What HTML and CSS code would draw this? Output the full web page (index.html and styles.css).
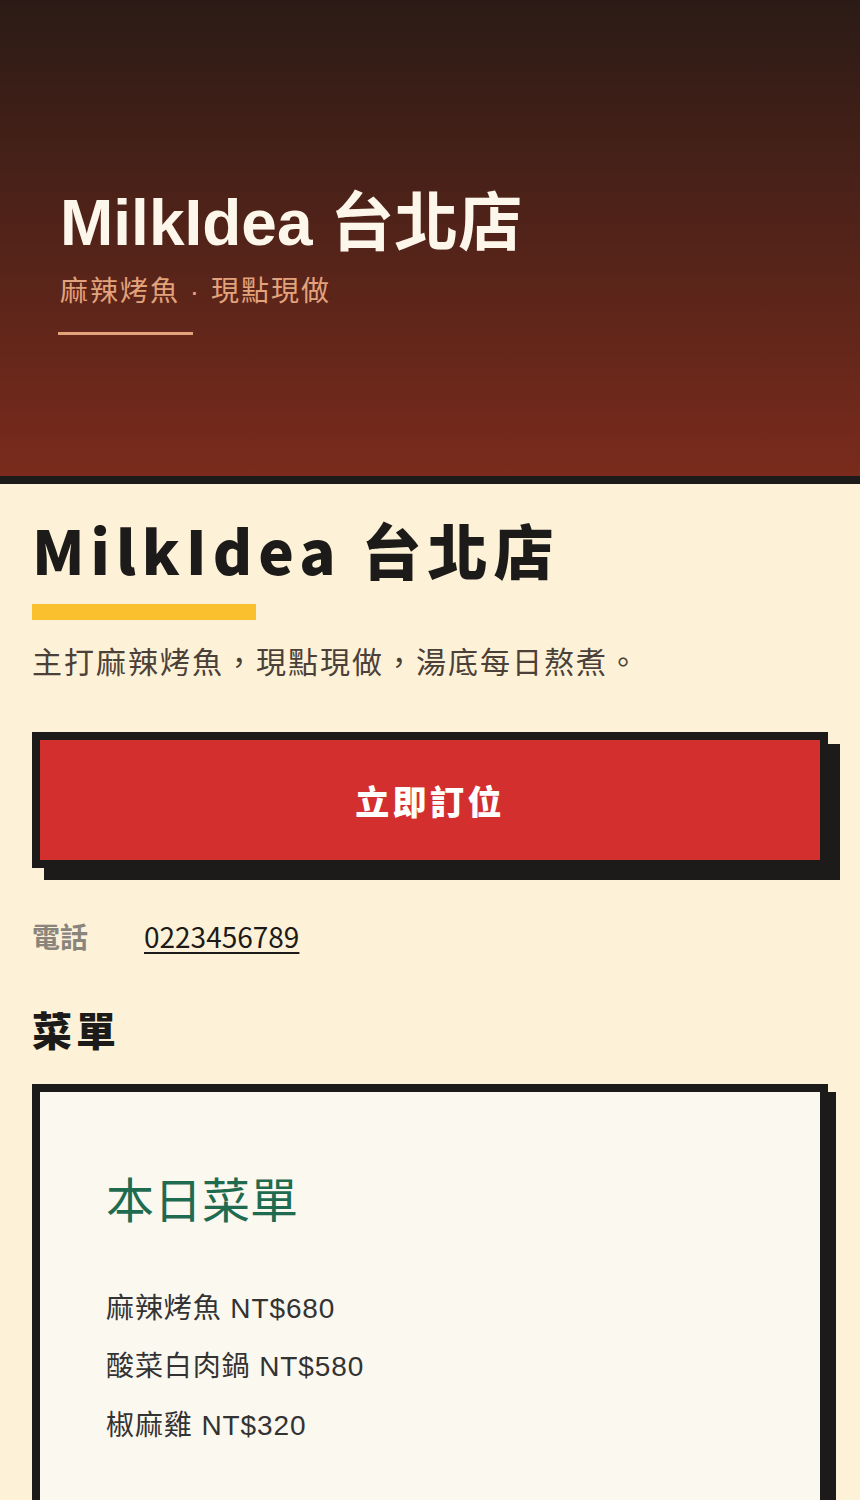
FILE: index.html
```html
<!DOCTYPE html>
<html lang="zh-Hant">
<head>
  <meta charset="UTF-8" />
  <meta name="viewport" content="width=device-width, initial-scale=1.0"/>
  <title>MilkIdea 台北店</title>
  <link rel="stylesheet" href="styles.css">
</head>
<body>
  <!-- Testata con sfumatura -->
  <header class="hero">
    <h1 class="hero-titolo">MilkIdea 台北店</h1>
    <p class="hero-sottotitolo">麻辣烤魚 · 現點現做</p>
    <div class="hero-linea"></div>
  </header>

  <main class="contenuto">
    <h2 class="titolo">MilkIdea 台北店</h2>
    <div class="barra"></div>
    <p class="descrizione">主打麻辣烤魚，現點現做，湯底每日熬煮。</p>

    <button class="prenota">立即訂位</button>

    <div class="contatto">
      <span class="etichetta">電話</span>
      <a class="telefono" href="tel:0223456789">0223456789</a>
    </div>

    <h3 class="sezione">菜單</h3>

    <!-- Scheda del menu -->
    <div class="menu">
      <h4 class="menu-titolo">本日菜單</h4>
      <p class="piatto">麻辣烤魚 NT$680</p>
      <p class="piatto">酸菜白肉鍋 NT$580</p>
      <p class="piatto">椒麻雞 NT$320</p>
    </div>
  </main>
</body>
</html>
```

FILE: styles.css
```css
:root {
  --scuro: #1c1b19;
  --crema: #fdf2d8;
  --rosso: #d32f2f;
  --giallo: #fbc02d;
  --verde: #1f6b4f;
  --pesca: #e2a27c;
}

* {
  margin: 0;
  padding: 0;
  box-sizing: border-box;
}

body {
  background-color: var(--crema);
  font-family: "Noto Sans CJK TC", sans-serif;
  color: var(--scuro);
}

.hero {
  height: 484px;
  padding: 185px 60px 0;
  background: linear-gradient(to bottom, #2b1b16, #7a2b1c);
  border-bottom: 8px solid var(--scuro);
  font-family: "Liberation Sans", "Noto Sans CJK TC", sans-serif;
}

.hero-titolo {
  font-size: 64px;
  line-height: 1.2;
  font-weight: bold;
  color: #fdf6ea;
}

.hero-sottotitolo {
  margin-top: 9px;
  font-size: 28px;
  line-height: 1.5;
  letter-spacing: 2px;
  color: var(--pesca);
}

.hero-linea {
  width: 135px;
  height: 3px;
  margin-top: 19px;
  margin-left: -2px;
  background-color: var(--pesca);
}

.contenuto {
  padding: 29px 32px 0;
}

.titolo {
  font-size: 60px;
  line-height: 1.2;
  font-weight: 900;
  letter-spacing: 0.1em;
}

.barra {
  width: 224px;
  height: 16px;
  margin-top: 19px;
  background-color: var(--giallo);
}

.descrizione {
  margin-top: 16px;
  font-size: 30px;
  line-height: 1.6;
  letter-spacing: 2px;
  color: #4b4139;
}

.prenota {
  display: block;
  width: 100%;
  height: 136px;
  margin-top: 48px;
  border: 8px solid var(--scuro);
  background-color: var(--rosso);
  box-shadow: 12px 12px 0 var(--scuro);
  color: #fff;
  font-family: inherit;
  font-size: 34px;
  font-weight: 900;
  letter-spacing: 0.1em;
  cursor: pointer;
}

.contatto {
  display: flex;
  align-items: baseline;
  margin-top: 47px;
  font-size: 28px;
  line-height: 1.5;
}

.etichetta {
  width: 112px;
  font-weight: bold;
  color: #8a857c;
}

.telefono {
  color: var(--scuro);
  text-decoration: underline;
  text-decoration-thickness: 2px;
  text-underline-offset: 4px;
}

.sezione {
  margin-top: 46px;
  font-size: 40px;
  line-height: 1.3;
  font-weight: 900;
  letter-spacing: 0.1em;
}

.menu {
  margin-top: 29px;
  padding: 81px 66px 120px;
  border: 8px solid var(--scuro);
  background-color: #fbf8f0;
  box-shadow: 8px 8px 0 var(--scuro);
  font-family: "Liberation Sans", "Noto Sans CJK TC", sans-serif;
}

.menu-titolo {
  margin-bottom: 57px;
  font-size: 48px;
  line-height: 1.2;
  font-weight: normal;
  color: var(--verde);
}

.piatto {
  margin-bottom: 16.5px;
  font-size: 28px;
  line-height: 1.5;
  letter-spacing: 0.9px;
  color: #333;
}
```
